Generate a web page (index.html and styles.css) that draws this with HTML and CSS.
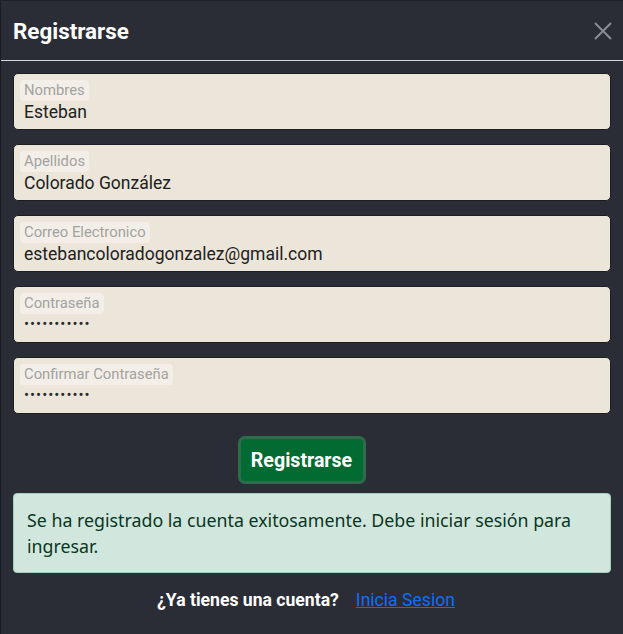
FILE: index.html
```html
<!DOCTYPE html>
<html lang="es">
<head>
<meta charset="utf-8">
<title>Registrarse</title>
<link rel="stylesheet" href="styles.css">
</head>
<body>
<div class="modal">
  <div class="modal-header">
    <h1 class="modal-title">Registrarse</h1>
    <button class="close" aria-label="Cerrar">
      <svg width="18" height="18" viewBox="0 0 18 18"><path d="M1 1 L17 17 M17 1 L1 17" stroke="#8a8d94" stroke-width="2" fill="none"/></svg>
    </button>
  </div>
  <div class="modal-body">
    <div class="field">
      <span class="label">Nombres</span>
      <span class="value">Esteban</span>
    </div>
    <div class="field">
      <span class="label">Apellidos</span>
      <span class="value">Colorado González</span>
    </div>
    <div class="field">
      <span class="label">Correo Electronico</span>
      <span class="value">estebancoloradogonzalez@gmail.com</span>
    </div>
    <div class="field">
      <span class="label">Contraseña</span>
      <span class="value dots">•••••••••••</span>
    </div>
    <div class="field">
      <span class="label">Confirmar Contraseña</span>
      <span class="value dots">•••••••••••</span>
    </div>
    <div class="actions">
      <button class="btn">Registrarse</button>
    </div>
    <div class="alert">Se ha registrado la cuenta exitosamente. Debe iniciar sesión para ingresar.</div>
    <div class="footer">
      <span class="question">¿Ya tienes una cuenta?</span>
      <a class="link" href="#">Inicia Sesion</a>
    </div>
  </div>
</div>
</body>
</html>
```

FILE: styles.css
```css
html, body {
  margin: 0;
  padding: 0;
  background: #2b2d36;
}
body {
  font-family: Roboto, "Liberation Sans", sans-serif;
}
.modal {
  min-height: 634px;
  box-sizing: border-box;
  border-left: 1px solid #1b1c21;
  border-top: 1px solid #1f2026;
}
.modal-header {
  height: 59px;
  display: flex;
  align-items: center;
  justify-content: space-between;
  padding: 0 11px 0 12px;
  border-bottom: 1px solid #d5d7da;
}
.modal-title {
  margin: 0;
  font-size: 22.4px;
  font-weight: 700;
  color: #ffffff;
}
.close {
  background: none;
  border: 0;
  padding: 0;
  width: 18px;
  height: 18px;
  display: flex;
  cursor: pointer;
}
.modal-body {
  padding: 12px 12px 0 12px;
  display: flex;
  flex-direction: column;
}
.field {
  height: 57px;
  box-sizing: border-box;
  background: #ece5da;
  border: 1px solid #1d1e22;
  border-radius: 5px;
  margin-bottom: 14px;
  padding: 6px 6px 0 6px;
  display: flex;
  flex-direction: column;
  align-items: flex-start;
}
.label {
  background: #f3efe8;
  border-radius: 4px;
  padding: 2px 4px 2px 4px;
  font-size: 14.8px;
  line-height: 17px;
  color: #a3a29f;
}
.value {
  padding-left: 4px;
  font-size: 17.5px;
  line-height: 22px;
  color: #212121;
}
.dots {
  font-size: 15px;
  letter-spacing: 1px;
  line-height: 20px;
  color: #2a2a2a;
}
.actions {
  display: flex;
  justify-content: center;
  margin-top: 8px;
  padding-right: 21px;
}
.btn {
  width: 128px;
  height: 48px;
  background: #026b32;
  border: 3px solid #2f6b4d;
  border-radius: 7px;
  color: #ffffff;
  font-family: Roboto, "Liberation Sans", sans-serif;
  font-size: 19.6px;
  font-weight: 700;
  padding: 0;
  cursor: pointer;
}
.alert {
  margin-top: 9px;
  background: #d1e7dd;
  border: 1px solid #a3cfbb;
  border-radius: 4px;
  padding: 13px 12px 13px 13px;
  font-family: "Noto Sans", "Open Sans", sans-serif;
  font-size: 17.8px;
  line-height: 26px;
  color: #0a3622;
}
.footer {
  display: flex;
  justify-content: center;
  gap: 17px;
  margin-top: 17px;
  padding-right: 12px;
  font-size: 17.6px;
  line-height: 20px;
}
.question {
  color: #ffffff;
  font-weight: 700;
}
.link {
  color: #0d6efd;
  text-decoration: underline;
}
```
